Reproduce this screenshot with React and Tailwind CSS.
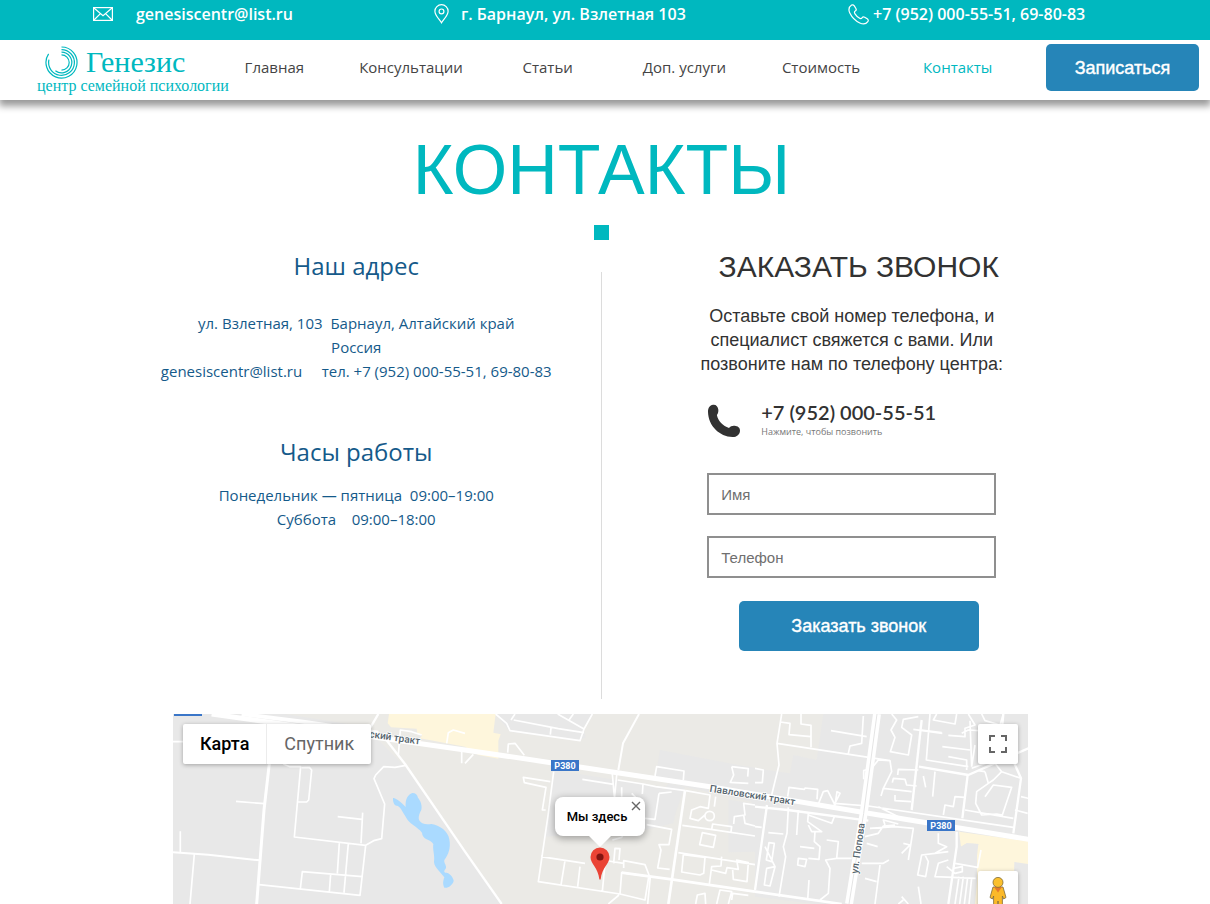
import React, { useState } from 'react'

const NAV_ITEMS = [
  { label: 'Главная' },
  { label: 'Консультации' },
  { label: 'Статьи' },
  { label: 'Доп. услуги' },
  { label: 'Стоимость' },
  { label: 'Контакты', active: true },
]

/* ---------- icons ---------- */

function MailIcon() {
  return (
    <svg width="20" height="14" viewBox="0 0 20 14" fill="none" stroke="#fff" strokeWidth="1.2" className="shrink-0">
      <rect x="0.6" y="0.6" width="18.8" height="12.8" />
      <path d="M1 1 L10 8.6 L19 1 M1 13 L7.4 6.6 M19 13 L12.6 6.6" />
    </svg>
  )
}

function PlaceIcon() {
  return (
    <svg width="15" height="20" viewBox="0 0 15 20" fill="none" stroke="#fff" strokeWidth="1.2" className="shrink-0">
      <path d="M7.5 18.8 C5.8 15.6 0.9 11.6 0.9 7.2 A6.6 6.5 0 0 1 14.1 7.2 C14.1 11.6 9.2 15.6 7.5 18.8 Z" />
      <circle cx="7.5" cy="7.4" r="2.4" />
    </svg>
  )
}

function HandsetIcon() {
  return (
    <svg width="21" height="21" viewBox="0 0 21 21" fill="none" stroke="#fff" strokeWidth="1.2" strokeLinejoin="round" className="shrink-0">
      <path d="M3.6 1.1 C4.7 0.4 5.6 0.9 6.3 1.9 L7.9 4.5 C8.5 5.6 8.3 6.5 7.3 7.1 C6.2 7.8 6.2 8.6 7 9.8 C8.2 11.6 9.6 13 11.3 14.1 C12.5 14.9 13.3 14.8 14 13.8 C14.7 12.8 15.6 12.6 16.7 13.2 L19.2 14.8 C20.3 15.5 20.6 16.5 19.8 17.6 C18 20.2 15 20.5 11.8 19 C7.2 16.8 4 13.5 1.8 9 C0.3 5.8 0.9 2.9 3.6 1.1 Z" />
    </svg>
  )
}

function PhoneSolidIcon() {
  return (
    <svg width="34" height="34" viewBox="0 0 34 34" className="shrink-0">
      <path
        d="M6 0.8 C9 0.4 11 2.6 11.3 5.6 C11.5 7.6 11.2 9.4 9.9 11 C11 16.8 16 22 22 24 C23.4 22.2 25.4 21.6 27.6 21.8 C30.8 22 33 23.8 33 26.4 C33 30.4 29.8 33 25.6 33 C12.4 32.6 1.4 22 1 8 C0.9 4.2 2.8 1.2 6 0.8 Z"
        fill="#323232"
      />
    </svg>
  )
}

function LogoMark() {
  return (
    <svg width="33" height="33" viewBox="0 0 33 33" fill="none" stroke="#00b8bf" strokeWidth="1.2" className="shrink-0">
      <path d="M16.5 1 A15.5 15.5 0 1 1 3.6 7.9" />
      <path d="M16.5 3.6 A12.9 12.9 0 1 1 3.9 13.7" />
      <path d="M16.5 6.2 A10.3 10.3 0 1 1 10.4 24.8" />
      <path d="M16.5 8.8 A7.7 7.7 0 0 1 16.5 24.2" />
    </svg>
  )
}

/* ---------- header ---------- */

function TopBar() {
  return (
    <div className="relative z-10 bg-[#00b8bf] text-white h-10 pl-[93px] grid grid-cols-[341fr_414fr_362fr] font-['Open_Sans',sans-serif] text-base leading-7 font-semibold whitespace-nowrap">
      <a href="mailto:genesiscentr@list.ru" className="flex items-center h-7 gap-[23px]">
        <MailIcon />
        genesiscentr@list.ru
      </a>
      <div className="flex items-center h-7 gap-3">
        <PlaceIcon />
        г. Барнаул, ул. Взлетная 103
      </div>
      <a href="tel:+79520005551" className="flex items-center h-7 gap-1">
        <HandsetIcon />
        +7 (952) 000-55-51, 69-80-83
      </a>
    </div>
  )
}

function Header() {
  return (
    <header className="relative h-[60px] flex bg-white pr-[11px] shadow-[0_5px_7px_1px_rgba(0,0,0,0.4)]">
      <a href="#" className="w-[206px] shrink-0 pl-[37px] pt-1.5 text-[#00b8bf] font-['Liberation_Serif',serif] whitespace-nowrap">
        <span className="flex items-center h-8 gap-2 pl-2 text-[30px] leading-8">
          <LogoMark />
          Генезис
        </span>
        <span className="block text-base leading-4">центр семейной психологии</span>
      </a>
      <nav className="flex-1 grid grid-cols-6 h-[54px] items-center text-center font-['Open_Sans',sans-serif] text-[15px] text-[#444444]">
        {NAV_ITEMS.map((item) => (
          <a key={item.label} href="#" className={item.active ? 'text-[#00b8bf]' : undefined}>
            {item.label}
          </a>
        ))}
      </nav>
      <button
        type="button"
        className="ml-5 mt-1 w-[153px] h-[47px] shrink-0 rounded-[5px] bg-[#2685b8] text-white font-['Liberation_Sans',sans-serif] text-lg [-webkit-text-stroke:0.4px_#fff]"
      >
        Записаться
      </button>
    </header>
  )
}

/* ---------- columns ---------- */

function AddressColumn() {
  return (
    <div className="text-center text-[#155a8a] font-['Open_Sans',sans-serif] text-[15px] leading-6">
      <h2 className="text-2xl leading-8 pt-[10px]">Наш адрес</h2>
      <p className="mt-[29px] whitespace-pre">ул. Взлетная, 103&nbsp; Барнаул, Алтайский край</p>
      <p>Россия</p>
      <p className="whitespace-pre">genesiscentr@list.ru{'     '}тел. +7 (952) 000-55-51, 69-80-83</p>
      <h2 className="text-2xl leading-8 mt-[53px]">Часы работы</h2>
      <p className="mt-[15px] whitespace-pre">Понедельник — пятница{'  '}09:00–19:00</p>
      <p className="whitespace-pre">Суббота{'    '}09:00–18:00</p>
    </div>
  )
}

function CallbackForm() {
  const [name, setName] = useState('')
  const [phone, setPhone] = useState('')

  const inputClass =
    "block w-full h-[42px] border-2 border-[#8f8f8f] px-3 text-[15px] text-[#323232] placeholder:text-[#6f6f6f] font-['Liberation_Sans',sans-serif] outline-none"

  return (
    <form
      onSubmit={(e) => e.preventDefault()}
      className="pl-6 flex flex-col items-center text-[#323232] font-['Liberation_Sans',sans-serif]"
    >
      <h2 className="text-[30px] leading-9 pt-[9px]">ЗАКАЗАТЬ ЗВОНОК</h2>
      <p className="w-[320px] mr-3.5 mt-[19px] text-center text-lg leading-6">
        Оставьте свой номер телефона, и специалист свяжется с вами. Или позвоните нам по телефону центра:
      </p>

      <div className="w-[289px] mr-3.5">
        <a href="tel:+79520005551" className="flex items-start gap-5 mt-7">
          <PhoneSolidIcon />
          <span>
            <span className="block font-['Lato',sans-serif] text-xl leading-4 font-semibold">+7 (952) 000-55-51</span>
            <span className="block mt-1.5 font-['Open_Sans',sans-serif] text-[9px] leading-3 text-[#777777]">
              Нажмите, чтобы позвонить
            </span>
          </span>
        </a>
        <input
          aria-label="Имя"
          placeholder="Имя"
          value={name}
          onChange={(e) => setName(e.target.value)}
          className={inputClass + ' mt-[35px]'}
        />
        <input
          aria-label="Телефон"
          placeholder="Телефон"
          type="tel"
          value={phone}
          onChange={(e) => setPhone(e.target.value)}
          className={inputClass + ' mt-[21px]'}
        />
      </div>

      <button
        type="submit"
        className="mt-[23px] w-60 h-[50px] rounded-[5px] bg-[#2685b8] text-white text-lg [-webkit-text-stroke:0.4px_#fff]"
      >
        Заказать звонок
      </button>
    </form>
  )
}

/* ---------- map ---------- */

function MapDrawing() {
  return (
    <svg viewBox="24 42 2565 570" className="block w-full" fill="none" strokeLinejoin="round">
      <rect x="24" y="42" width="2565" height="570" fill="#e8e8e8" />

      {/* land use */}
      <path d="M640 42 H2590 V612 H1008 L900 455 L720 200 L600 80 L360 42 Z" fill="#ebeae6" />
      <path d="M990 42 H1285 L1255 82 L1262 112 L1240 122 L1035 95 Z" fill="#e8e8e8" />
      <path d="M1165 210 L1355 240 L1480 260 L1540 290 L1525 370 L1440 390 L1140 410 Z M1485 150 L1720 195 L1780 205 V310 L1470 240 Z" fill="#e8e8e8" />
      <path d="M1510 250 L1560 262 L1520 370 L1440 375 Z" fill="#e8e8e8" />
      <path d="M1975 42 H2590 V612 H1950 L1770 590 V455 L1545 460 L1570 280 L1760 310 L1770 205 L1875 220 L1885 165 L1955 180 Z" fill="#e8e8e8" />
      <path d="M1560 270 L1690 288 V470 L1540 455 Z" fill="#ebeae6" />
      <path d="M672 42 L668 70 L678 82 L755 86 L757 102 L772 106 L765 115 L900 140 L940 165 L1000 176 L1000 122 L1007 103 L985 98 L992 42 Z" fill="#fef6dc" />
      <path d="M2382 395 L2590 424 V492 L2548 486 L2545 612 H2430 L2436 540 L2436 450 L2440 432 L2405 430 L2388 440 Z" fill="#fef6dc" />
      <path d="M2440 432 L2405 430 L2388 440 L2384 520 L2430 520 Z" fill="#e8e8e8" />

      {/* pond */}
      <path
        d="M684 294 C690 292 705 303 722 321 C720 298 728 284 742 279 C752 279 757 284 759 293 C767 303 772 316 769 329 C763 342 758 352 764 363 C772 373 782 374 800 372 C826 376 850 395 853 418 C858 444 850 465 838 480 C836 490 847 498 842 506 C836 512 836 518 845 518 C858 521 866 536 866 543 C862 556 850 565 838 563 C832 552 835 540 838 532 C830 520 807 501 807 486 C810 466 802 448 805 432 C795 416 772 420 771 398 C758 380 730 370 722 350 C712 335 706 318 695 317 C688 316 683 306 684 294 Z"
        fill="#aadaff"
      />

      {/* west side */}
      <g stroke="#fff" strokeWidth="5">
        <path d="M24 125 H60 M46 394 V456 M88 462 L75 612 M213 304 L299 311 M355 192 L375 200 H407 L388 411 L602 436 L585 586 L282 554 M410 203 L433 202 L440 210 L431 300 L425 306 H400 M518 350 L591 358 M593 338 L588 430 M523 428 L517 520 M550 430 L537 578 M406 566 L412 515 L592 530 M497 522 L493 576 M602 436 L626 422 L650 416 L659 312 L627 236 L632 225 L656 200 L690 202 L722 196 M700 165 L706 90 L740 95 L770 105 M845 130 L850 98 L865 90 L900 100 M890 150 V190" />
        <path d="M24 457 L130 464 L285 481" strokeWidth="6" />
        <path d="M313 190 L297 330 L275 612" strokeWidth="9" />
        <path d="M640 42 L612 90 L660 115 L720 192 L900 455 L1010 612" strokeWidth="7" />
      </g>

      {/* centre */}
      <g transform="translate(900 0)" stroke="#fff" strokeWidth="5">
        <path d="M92 42 L125 70 L135 92 L345 122 L357 87 L278 42 M138 60 L150 42 M146 60 L280 86 L357 98 M258 84 L256 104 M312 60 L325 42 M357 87 L382 42 M128 158 L130 132 L150 130 L178 166 M0 190 L25 163" />
        <path d="M522 42 L474 130 L460 210" strokeWidth="6" />
        <path d="M242 330 L232 330 L243 262 L178 248 L175 232 L256 245 M266 215 L250 340 L220 545 L465 582 M352 238 L446 253 M228 470 L360 490 M300 482 L288 555 M345 500 L338 560 M420 490 L412 574 M442 222 L448 290 M455 225 L448 300 M470 262 V290 M458 240 L534 252 L572 260 L662 272 M534 252 L532 282 M570 228 L575 200 L657 213 L655 240 M582 280 L570 358 L540 355 M582 280 L620 276 M545 374 L620 388 L612 434 H582 L588 450 L578 504 L614 508 M446 490 L450 445 L465 446 L462 480 M476 504 V482 L540 494 L552 525 L540 600 L465 582 L470 518 L540 528 L556 530 L548 612 M430 612 L462 585 M442 420 L470 412 L476 400 M500 280 L512 292 M412 480 L476 490 L476 504" />
        <path d="M660 272 L610 612" strokeWidth="8" />
        <path d="M470 518 L620 538 L870 575" strokeWidth="8" />
        <path d="M662 272 L735 285 L730 325 L705 320 L680 330 L675 355 L700 362 L720 345 M752 290 L748 320 M652 376 L738 388 L870 408 M640 458 L870 494 M720 348 a14 14 0 1 1 28 0 a14 14 0 1 1 -28 0 M740 388 L743 372 L800 380 L798 395 M806 372 L808 350 L840 345 L836 310 L870 315 M836 345 L840 370 L870 378 M712 398 L752 406 L745 442 L704 434 Z M655 464 L720 472 L716 520 L705 525 L650 516 Z M770 470 L768 498 L740 500 L733 552 M740 510 L782 520 L786 503 L820 508 L815 480 L850 488 L846 545 L805 538 L803 510 M800 200 L850 206 L848 230 M800 200 L806 225 L796 247 L850 250 M692 612 L697 585 L720 580 L722 612 M755 612 L765 570 L800 575 L790 612 M800 600 L803 580 L850 586" />
      </g>

      {/* east side */}
      <g transform="translate(1770 0)" stroke="#fff" strokeWidth="5">
        <path d="M0 205 L25 210 L22 248 L0 248 M80 42 L66 130 L72 195 L50 285 M76 66 L105 70 L102 104 L168 110 V142 M138 42 V72 L168 76 V110 M66 130 L405 182 M228 92 L335 110 M325 48 L320 130 L285 138 L280 160 M98 290 L102 262 L148 268 L150 264 L188 268 L186 298 M190 312 L205 275 L218 272 L240 315 L246 275 L255 280 L236 318 M238 310 L340 318 M340 318 L775 382 M370 320 L430 350 M326 238 V212 L350 205 L370 180 L405 182 L410 215 L385 265 L470 275 M385 265 L378 288 M412 248 L415 235 L450 238 L455 255 L485 258 M428 225 L430 208 L490 210 M420 285 V302 L468 305 M505 228 L512 262 M540 215 L533 290" />
        <path d="M410 42 L425 60 L408 90 L420 112 L406 155 L460 165 L470 105 L440 82 L445 58 L490 50 M475 88 L562 100 M525 42 L514 180 L640 200 M500 90 L560 98 M545 42 L535 60 L600 72 L605 42 M640 42 L660 75 L630 85 V110 L580 106 M562 140 L645 150 M620 100 L640 90 L720 95 M645 62 L650 200 M580 170 L635 180 L635 210 M680 42 L690 62 L735 75 L745 42 M660 135 L650 200 M650 205 L720 180" />
        <path d="M500 60 L470 330" strokeWidth="7" />
        <path d="M492 200 L640 225 L820 145 M638 225 L622 355 M778 190 L798 235 L775 400 M745 42 L742 75 L775 80" strokeWidth="7" />
        <path d="M690 215 L700 250 L665 275 L662 310 L680 345 L725 342 L742 345 L770 262 L715 255 L690 290 M740 215 L715 240 L700 250 M740 215 L798 235 M720 190 L740 215 M798 290 L820 295 M780 330 L818 340 M565 345 L570 315 L595 320 L600 290 L628 292 M630 330 L775 355 M670 212 L690 215" />
        <path d="M0 320 L98 330 L340 362 M36 315 L0 570" strokeWidth="7" />
        <path d="M0 575 L260 612" strokeWidth="8" />
        <path d="M100 322 L96 400 L85 440 L92 470 L72 590 M130 330 L125 405 M160 340 L158 365 L200 395 H170 L160 375 M160 345 L230 370 L238 350 M180 395 L178 425 L195 440 L192 478 L160 475 M135 440 L178 445 M130 475 L155 478 L150 500 L128 495 Z M215 420 L250 425 L245 475 L212 480 L225 505 L220 580 L195 600 M245 475 H290 M0 380 L20 382 M40 398 L85 402 M42 428 L58 430 L50 485 L34 480 Z M30 440 L60 500 L45 558 L28 555 L35 505 L60 500 M162 540 L158 600 M345 385 L420 380 L475 385 L460 480 M390 375 L385 360 L430 372 M440 460 L465 435 L445 430 M330 410 L370 400 L385 378 L420 375 M335 430 L368 440 M320 490 L385 490 L402 480 M375 495 L360 612 M330 535 L365 545" />
        <path d="M605 395 L605 440 L580 612" strokeWidth="7" />
        <path d="M550 400 V430 L575 440 L540 460 L500 465 L488 525 L512 530 L520 485 L510 465 M540 460 L580 455 M580 480 L550 490 L540 530 L662 535 M575 500 L600 520 L622 515 V500 L595 505 M600 490 L668 502 L678 450 M612 530 L600 612 M625 530 L614 612 M638 532 L628 612 M650 534 L642 612 M490 560 L498 612 M440 590 L460 612 M430 612 L445 600" />
      </g>

      {/* main roads */}
      <g stroke="#fff">
        <path d="M140 42 L900 150 L1158 188 L1635 260 L2110 340 L2590 418" strokeWidth="15" />
        <path d="M230 42 L420 66 L640 98" strokeWidth="12" />
        <path d="M2136 42 L2096 340 L2052 612" strokeWidth="24" />
      </g>
      <path d="M2136 42 L2096 340 L2052 612" stroke="#e4e4e4" strokeWidth="3" />

      {/* labels */}
      <g fill="#56656e" className="font-['Roboto',sans-serif] font-medium" fontSize="30" stroke="#fff" strokeWidth="5" paintOrder="stroke">
        <text transform="translate(612 112) rotate(8)">ский тракт</text>
        <text transform="translate(1633 275) rotate(9)">Павловский тракт</text>
        <text transform="translate(2078 522) rotate(-82)">ул. Попова</text>
      </g>
      <g className="font-['Roboto',sans-serif] font-bold" fontSize="27" textAnchor="middle">
        <rect x="1158" y="180" width="84" height="33" fill="#3a76c8" />
        <text x="1200" y="206" fill="#fff">Р380</text>
        <rect x="2286" y="360" width="84" height="33" fill="#3a76c8" />
        <text x="2328" y="386" fill="#fff">Р380</text>
      </g>
      <rect x="27" y="42" width="84" height="6" fill="#3a76c8" />
    </svg>
  )
}

function MapPanel() {
  const [mode, setMode] = useState('map')

  const modeClass = (value) =>
    mode === value ? 'px-[17px] font-medium text-black' : 'px-[17px] text-[#666666]'

  return (
    <section className="relative w-full max-w-[855px] mx-auto overflow-hidden bg-[#e8e8e8] font-['Roboto',sans-serif]">
      <MapDrawing />

      <div className="absolute left-2.5 top-2.5 h-10 flex bg-white rounded-xs shadow-[0_1px_4px_rgba(0,0,0,0.3)] text-lg divide-x divide-[#ececec]">
        <button type="button" onClick={() => setMode('map')} className={modeClass('map')}>
          Карта
        </button>
        <button type="button" onClick={() => setMode('satellite')} className={modeClass('satellite')}>
          Спутник
        </button>
      </div>

      <button
        type="button"
        aria-label="На весь экран"
        className="absolute right-2.5 top-2.5 size-10 flex items-center justify-center bg-white rounded-xs shadow-[0_1px_4px_rgba(0,0,0,0.3)]"
      >
        <svg width="18" height="18" viewBox="0 0 18 18" fill="none" stroke="#666" strokeWidth="2">
          <path d="M1 6 V1 H6 M12 1 H17 V6 M17 12 V17 H12 M6 17 H1 V12" />
        </svg>
      </button>

      <div className="absolute right-2.5 top-[157px] w-10 h-12 flex justify-center pt-1.5 bg-white rounded-xs shadow-[0_1px_4px_rgba(0,0,0,0.3)]">
        <svg width="18" height="34" viewBox="0 0 18 34" stroke="#7d6a3a" strokeWidth="0.8">
          <path d="M4 10 H14 L17 20.5 L14.6 22 L13.4 19 V33 H9.8 L9 24 L8.2 33 H4.6 V19 L3.4 22 L1 20.5 Z" fill="#fbb929" />
          <path d="M5 10 H13 L9 15.6 Z" fill="#e5792b" stroke="none" />
          <circle cx="9" cy="5.4" r="5" fill="#fbc02d" />
        </svg>
      </div>

      {/* info window with its marker */}
      <div className="absolute left-[382px] top-[83px] w-[90px] flex flex-col items-center">
        <div className="relative w-full h-[39px] flex items-center justify-center rounded-lg bg-white shadow-[0_2px_7px_1px_rgba(0,0,0,0.3)] text-[13px] font-medium text-black">
          <span className="pr-1.5">Мы здесь</span>
          <button type="button" aria-label="Закрыть" className="absolute right-1 top-1">
            <svg width="10" height="10" viewBox="0 0 10 10" stroke="#666" strokeWidth="1.4">
              <path d="M1 1 L9 9 M9 1 L1 9" />
            </svg>
          </button>
        </div>
        <svg width="22" height="11" viewBox="0 0 22 11" className="relative">
          <path d="M0 0 H22 L11 11 Z" fill="#fff" />
        </svg>
        <svg width="20" height="34" viewBox="0 0 20 34">
          <path d="M10 0.5 A9.5 9.5 0 0 1 19.5 10 C19.5 17 12 20 10.6 32.4 H9.4 C8 20 0.5 17 0.5 10 A9.5 9.5 0 0 1 10 0.5 Z" fill="#ea4335" />
          <circle cx="10" cy="10" r="3.6" fill="#811411" />
        </svg>
      </div>
    </section>
  )
}

export default function App() {
  return (
    <div className="bg-white">
      <TopBar />
      <Header />
      <main className="pr-[7px]">
        <h1 className="pt-[30px] text-center text-[70px] leading-20 text-[#00b8bf] font-['Liberation_Sans',sans-serif]">
          КОНТАКТЫ
        </h1>
        <div className="size-[15px] mx-auto mt-[15px] bg-[#00b8bf]" />
        <div className="max-w-[980px] mx-auto grid grid-cols-[1fr_1px_1fr]">
          <AddressColumn />
          <div className="mt-8 h-[427px] bg-[#dcdcdc]" />
          <CallbackForm />
        </div>
        <div className="pt-[15px] pr-0.5">
          <MapPanel />
        </div>
      </main>
    </div>
  )
}
